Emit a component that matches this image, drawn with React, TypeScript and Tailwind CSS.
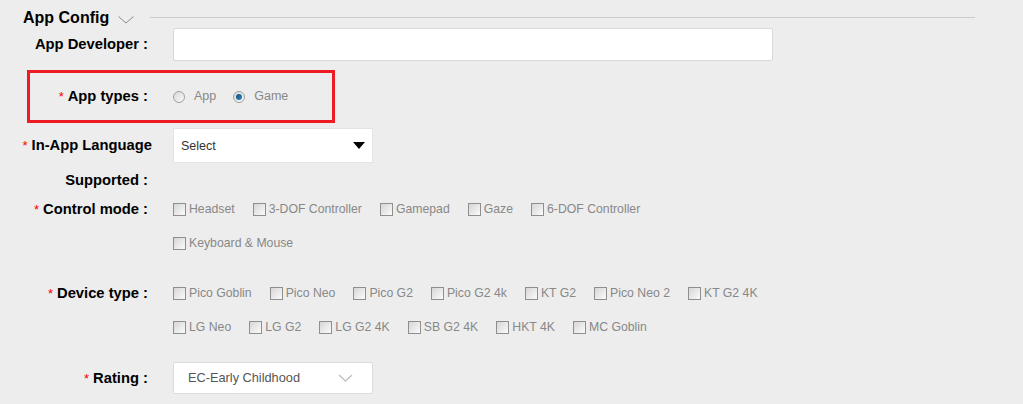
import React from 'react';

const font = { fontFamily: '"Liberation Sans", Arial, sans-serif' };

const Check = ({ label }: { label: string }) => (
  <label className="flex items-center mr-[18px] text-[12.25px] text-[#888]">
    <span className="w-[13px] h-[13px] border border-[#8f8f8f] bg-gradient-to-br from-[#d6d6d6] to-[#fbfbfb] mr-[3px] shrink-0" />
    {label}
  </label>
);

const Radio = ({ label, checked }: { label: string; checked?: boolean }) => (
  <label className="flex items-center mr-[17px] text-[12.5px] text-[#888]">
    <span className="w-[12px] h-[12px] rounded-full border border-[#a0a0a0] bg-gradient-to-br from-[#d8d8d8] to-[#fafafa] mr-[9px] flex items-center justify-center">
      {checked && <span className="w-[6px] h-[6px] rounded-full bg-gradient-to-br from-[#1a4a70] to-[#2b8bd0]" />}
    </span>
    {label}
  </label>
);

const Req = () => <span className="text-[#f00] font-normal text-[13px] mr-[4px]">*</span>;

const Label = ({ children, req }: { children: React.ReactNode; req?: boolean }) => (
  <div className="w-[148px] shrink-0 text-right text-[14.75px] font-bold text-black">
    {req && <Req />}
    {children}
  </div>
);

const controls = ['Headset', '3-DOF Controller', 'Gamepad', 'Gaze', '6-DOF Controller'];
const devices1 = ['Pico Goblin', 'Pico Neo', 'Pico G2', 'Pico G2 4k', 'KT G2', 'Pico Neo 2', 'KT G2 4K'];
const devices2 = ['LG Neo', 'LG G2', 'LG G2 4K', 'SB G2 4K', 'HKT 4K', 'MC Goblin'];

export default function App() {
  return (
    <div className="w-[1023px] h-[404px] bg-[#ededed] overflow-hidden" style={font}>
      <div className="h-[28px] pt-[8px] flex items-center">
        <span className="ml-[23px] text-[16px] font-bold text-black">App Config</span>
        <svg width="16" height="8" viewBox="0 0 16 8" className="ml-[9px] mt-[4px]">
          <path d="M0.5 0.5 L8 7 L15.5 0.5" fill="none" stroke="#8a8a8a" strokeWidth="1" />
        </svg>
        <div className="ml-[16px] w-[825px] h-px bg-[#cccccc] mt-[-2px]" />
      </div>

      <div className="h-[33px] flex items-center">
        <Label>App Developer :</Label>
        <div className="ml-[25px] w-[600px] h-[33px] bg-white border border-[#d9d9d9] rounded-[2px]" />
      </div>

      <div className="mt-[9px] ml-[27px] w-[308px] h-[53px] border-[3px] border-[#ed1c24] flex items-center">
        <div className="w-[118px] text-right text-[14.75px] font-bold text-black">
          <Req />App types :
        </div>
        <div className="ml-[25px] flex items-center">
          <Radio label="App" />
          <Radio label="Game" checked />
        </div>
      </div>

      <div className="mt-[5px] flex">
        <div className="w-[148px] shrink-0 text-right text-[14.75px] font-bold text-black leading-[35px]">
          <div className="mr-[-4px] whitespace-nowrap"><Req />In-App Language</div>
          <div>Supported :</div>
        </div>
        <div className="ml-[25px] w-[200px] h-[35px] bg-white border border-[#e4e4e4] flex items-center justify-between pl-[7px] pr-[7px]">
          <span className="text-[12.5px] text-[#333] mt-[2px]">Select</span>
          <svg width="12" height="7" viewBox="0 0 12 7">
            <path d="M0 0 H12 L6 7 Z" fill="#000" />
          </svg>
        </div>
      </div>

      <div className="mt-[-6px] flex">
        <div className="h-[34px] flex items-center"><Label req>Control mode :</Label></div>
        <div className="ml-[25px]">
          <div className="h-[34px] flex items-center">
            {controls.map((c) => <Check key={c} label={c} />)}
          </div>
          <div className="h-[34px] flex items-center">
            <Check label="Keyboard & Mouse" />
          </div>
        </div>
      </div>

      <div className="mt-[16px] flex">
        <div className="h-[34px] flex items-center"><Label req>Device type :</Label></div>
        <div className="ml-[25px]">
          <div className="h-[34px] flex items-center">
            {devices1.map((c) => <Check key={c} label={c} />)}
          </div>
          <div className="h-[34px] flex items-center">
            {devices2.map((c) => <Check key={c} label={c} />)}
          </div>
        </div>
      </div>

      <div className="mt-[18px] flex items-center">
        <Label req>Rating :</Label>
        <div className="ml-[25px] w-[200px] h-[32px] bg-white border border-[#dcdcdc] rounded-[2px] flex items-center justify-between pl-[14px] pr-[19px]">
          <span className="text-[12.75px] text-[#555]">EC-Early Childhood</span>
          <svg width="15" height="8" viewBox="0 0 15 8">
            <path d="M1 1 L7.5 7 L14 1" fill="none" stroke="#c4c4c4" strokeWidth="1.5" />
          </svg>
        </div>
      </div>
    </div>
  );
}
